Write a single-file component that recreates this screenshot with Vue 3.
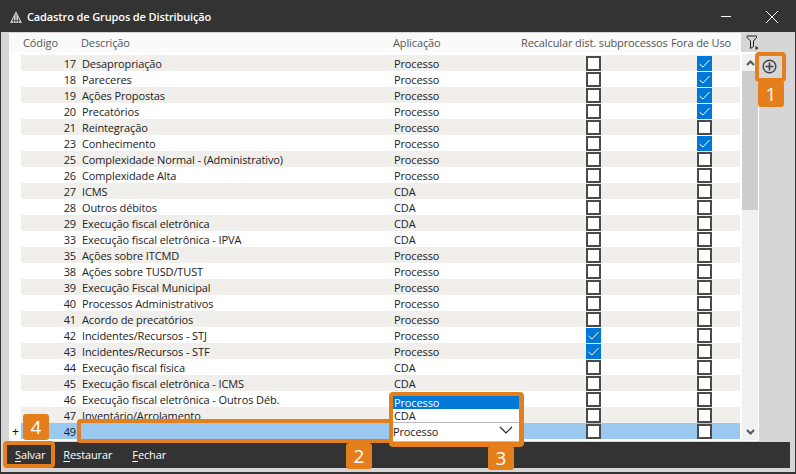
<script setup>
const rows = [
  [17,'Desapropriação','Processo',0,1],[18,'Pareceres','Processo',0,1],[19,'Ações Propostas','Processo',0,1],
  [20,'Precatórios','Processo',0,1],[21,'Reintegração','Processo',0,0],[23,'Conhecimento','Processo',0,1],
  [25,'Complexidade Normal - (Administrativo)','Processo',0,0],[26,'Complexidade Alta','Processo',0,0],
  [27,'ICMS','CDA',0,0],[28,'Outros débitos','CDA',0,0],[29,'Execução fiscal eletrônica','CDA',0,0],
  [33,'Execução fiscal eletrônica - IPVA','CDA',0,0],[35,'Ações sobre ITCMD','Processo',0,0],
  [38,'Ações sobre TUSD/TUST','Processo',0,0],[39,'Execução Fiscal Municipal','Processo',0,0],
  [40,'Processos Administrativos','Processo',0,0],[41,'Acordo de precatórios','Processo',0,0],
  [42,'Incidentes/Recursos - STJ','Processo',1,0],[43,'Incidentes/Recursos - STF','Processo',1,0],
  [44,'Execução fiscal física','CDA',0,0],[45,'Execução fiscal eletrônica - ICMS','CDA',0,0],
  [46,'Execução fiscal eletrônica - Outros Déb.','',0,0],[47,'Inventário/Arrolamento','',0,0],
  [49,'','',0,0]
]
</script>

<template>
  <div class="win">
    <header class="title">
      <svg class="logo" width="14" height="14" viewBox="0 0 14 14"><path d="M7 1 L13 13 H1 Z" fill="#ccc"/><path d="M7 4V13M4.500 8V13M9.500 8V13M3 10.500H11" stroke="#333" stroke-width=".7"/></svg>
      <span class="title-text">Cadastro de Grupos de Distribuição</span>
      <svg class="min" width="12" height="12" viewBox="0 0 12 12"><path d="M1 6.500H11" stroke="#fff" stroke-width="1"/></svg>
      <svg class="close" width="14" height="14" viewBox="0 0 14 14"><path d="M1 1L13 13M13 1L1 13" stroke="#fff" stroke-width="1"/></svg>
    </header>
    <div class="body">
      <div class="gridwrap">
        <div class="head">
          <span class="h-code">Código</span><span class="h-desc">Descrição</span><span class="h-app">Aplicação</span>
          <span class="h-rec">Recalcular dist. subprocessos</span><span class="h-out">Fora de Uso</span>
        </div>
        <div class="main">
          <div class="rows">
            <div v-for="(r,i) in rows" :key="r[0]" class="row" :class="{odd:i%2===0,sel:r[0]===49}">
              <span class="c-mark">{{ r[0]===49 ? '+' : '' }}</span>
              <span class="c-code">{{ r[0] }}</span>
              <span class="c-desc">{{ r[1] }}</span>
              <span class="c-app">{{ r[2] }}</span>
              <span class="c-rec"><i class="box" :class="{on:r[3]}"><svg v-if="r[3]" width="15" height="15" viewBox="0 0 15 15"><path d="M2.500 8L6 11L12.500 4" fill="none" stroke="#fff"/></svg></i></span>
              <span class="c-out"><i class="box" :class="{on:r[4]}"><svg v-if="r[4]" width="15" height="15" viewBox="0 0 15 15"><path d="M2.500 8L6 11L12.500 4" fill="none" stroke="#fff"/></svg></i></span>
            </div>
          </div>
          <div class="sbar">
            <div class="sbtn"><svg width="9" height="6" viewBox="0 0 9 6"><path d="M1 5L4.500 1.500L8 5" fill="none" stroke="#555" stroke-width="2"/></svg></div>
            <div class="thumb"></div>
            <div class="track"></div>
            <div class="sbtn"><svg width="9" height="6" viewBox="0 0 9 6"><path d="M1 1L4.500 4.500L8 1" fill="none" stroke="#555" stroke-width="2"/></svg></div>
          </div>
        </div>
      </div>
      <aside class="side">
        <svg class="filter" width="14" height="16" viewBox="0 0 14 16"><path d="M1 1H10.500V2.500L7.500 6V11.500L4.500 13.500V6L1 2.500Z" fill="none" stroke="#222"/><path d="M9.500 11L12.500 13L9.500 15Z" fill="#222"/></svg>
        <svg class="plus" width="15" height="15" viewBox="0 0 15 15"><circle cx="7.500" cy="7.500" r="6.300" fill="none" stroke="#444" stroke-width="1.400"/><path d="M3.500 7.500H11.500M7.500 3.500V11.500" stroke="#444" stroke-width="1.600"/></svg>
      </aside>
    </div>
    <footer class="foot">
      <span class="btn b1"><u>S</u>alvar</span><span class="btn b2"><u>R</u>estaurar</span><span class="btn b3"><u>F</u>echar</span>
    </footer>

    <div class="ann a-add"></div><div class="tag t1">1</div>
    <div class="ann a-row"></div><div class="tag t2">2</div>
    <div class="ann a-combo">
      <div class="opt act">Processo</div>
      <div class="opt">CDA</div>
      <div class="cur">Processo<svg width="14" height="8" viewBox="0 0 14 8"><path d="M1 1L7 7L13 1" fill="none" stroke="#222" stroke-width="1.200"/></svg></div>
    </div><div class="tag t3">3</div>
    <div class="ann a-save"></div><div class="tag t4">4</div>
  </div>
</template>

<style>
body { margin: 0; }
</style>
<style scoped>
.win { position: relative; width: 796px; height: 474px; background: #d6d6d6; overflow: hidden; font: 11px/16px "Open Sans", "Noto Sans", sans-serif; letter-spacing: -0.12px; color: #222; box-sizing: border-box; border: 1px solid #333; border-top: 0; border-bottom-width: 2px; }
.title { height: 32px; background: #333; display: flex; align-items: center; padding-left: 8px; color: #fff; padding-top: 2px; box-sizing: border-box; }
.logo { margin-right: 4px; }
.title-text { flex: 1; font-size: 11px; font-weight: 600; }
.min { margin-right: 33px; margin-top: -2px; }
.close { margin-right: 16px; }
.body { display: flex; height: 410px; padding: 1px 0 0 8px; box-sizing: border-box; }
.gridwrap { width: 750px; }
.head { height: 19px; background: #fafafa; display: flex; align-items: center; color: #555; width: 732px; white-space: nowrap; }
.h-code { width: 72px; padding-left: 14px; box-sizing: border-box; }
.h-desc { width: 312px; }
.h-app { width: 128px; }
.h-rec { width: 150px; }
.main { display: flex; justify-content: space-between; background: #fff; height: 389px; padding-top: 2px; box-sizing: border-box; }
.rows { width: 731px; padding-top: 1px; }
.row { height: 16px; display: flex; line-height: 18px; white-space: nowrap; }
.row.odd > * { background: #f0efeb; }
.row.sel > * { background: #9ac8ee; }
.row .c-mark, .row.odd .c-mark, .row.sel .c-mark { width: 12px; background: #fff; font-size: 12px; color: #111; padding-left: 3px; box-sizing: border-box; }
.c-code { width: 55px; text-align: right; }
.c-desc { width: 312px; padding-left: 6px; box-sizing: border-box; }
.c-app { width: 199px; padding-left: 6px; box-sizing: border-box; }
.c-rec { width: 110px; }
.c-out { width: 43px; }
.c-rec, .c-out { display: flex; align-items: center; }
.box { display: block; width: 15px; height: 15px; box-sizing: border-box; border: 2px solid #4a4a4a; background: #fff; flex: none; margin-top: 1px; margin-left: -1px; }
.c-out .box { margin-left: 0; }
.box.on { background: #0078d7; border-color: #0078d7; }
.box svg { display: block; margin: -2px; }
.sbar { width: 16px; height: 386px; background: #f0f0f0; display: flex; flex-direction: column; margin-right: 1px; }
.sbtn { height: 17px; display: flex; align-items: center; justify-content: center; flex: none; }
.thumb { height: 139px; background: #cdcdcd; }
.track { flex: 1; }
.side { flex: 1; position: relative; }
.filter { position: absolute; left: -13px; top: 2px; }
.plus { position: absolute; left: 3px; top: 26px; }
.foot { height: 26px; margin: 0 5px; background: #333; color: #fff; display: flex; align-items: center; font-size: 11px; }
.btn { position: relative; }
.b1 { margin-left: 9px; }
.b2 { margin-left: 18px; }
.b3 { margin-left: 20px; }
.btn u { text-underline-offset: 2px; }
.ann { position: absolute; border: 4px solid #e47f1c; border-radius: 4px; box-sizing: border-box; }
.tag { position: absolute; width: 26px; height: 26px; background: #e47f1c; color: #fff; border-radius: 3px; font-size: 19px; line-height: 26px; letter-spacing: 0; text-align: center; }
.a-add { left: 754px; top: 52px; width: 31px; height: 30px; }
.t1 { left: 757px; top: 81px; }
.a-row { left: 76px; top: 419px; width: 316px; height: 24px; border-right: 0; border-radius: 4px 0 0 4px; }
.t2 { left: 345px; top: 443px; }
.a-combo { left: 388px; top: 392px; width: 135px; height: 55px; background: #fff; border-right-width: 5px; border-bottom-width: 5px; }
.t3 { left: 487px; top: 446px; height: 24px; line-height: 24px; }
.a-save { left: 2px; top: 441px; width: 52px; height: 27px; }
.t4 { left: 22px; top: 414px; }
.opt { height: 13px; line-height: 13px; padding-left: 1px; }
.opt.act { background: #0078d7; color: #fff; }
.cur { border-top: 1px solid #bbb; border-bottom: 1px solid #bbb; height: 20px; line-height: 18px; display: flex; justify-content: space-between; align-items: center; padding-right: 6px; box-sizing: border-box; }
.cur svg { margin-top: -4px; }
</style>
